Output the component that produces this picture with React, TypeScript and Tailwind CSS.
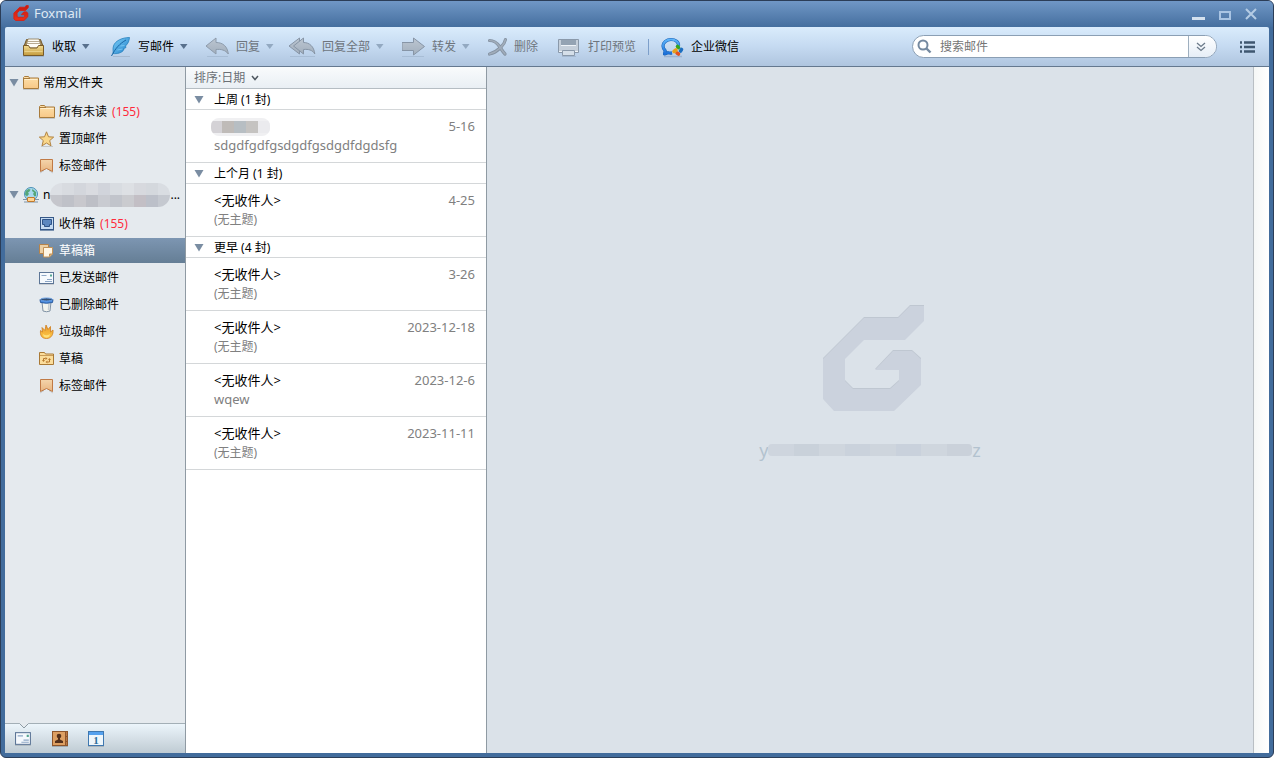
import { useState } from "react";
import type { ReactNode } from "react";

const LOGO =
  "M87 0H101V15L82 34H41L22 53V75L30 83H67L76 75V64H52L70 45H89L98 53V79L71 105H11L0 93V53L41 12H75Z";

/* ---------- small glyphs ---------- */

function Caret({ className }: { className: string }) {
  return (
    <svg viewBox="0 0 8 5" className={`h-[5px] w-2 ${className}`} aria-hidden="true">
      <path d="M0 0h7.500L3.750 5z" fill="currentColor" />
    </svg>
  );
}

function Disclosure() {
  return (
    <svg viewBox="0 0 10 8" className="h-2 w-[10px] shrink-0 text-[#7a8da2]" aria-hidden="true">
      <path d="M.5 0h9L5 7.500z" fill="currentColor" />
    </svg>
  );
}

function Icon({ children, className = "size-4" }: { children: ReactNode; className?: string }) {
  return (
    <svg viewBox="0 0 16 16" className={`shrink-0 ${className}`} aria-hidden="true">
      {children}
    </svg>
  );
}

function Gradients() {
  return (
    <svg className="absolute size-0" aria-hidden="true">
      <defs>
        <linearGradient id="folder" x1="0" y1="0" x2="0" y2="1">
          <stop offset="0" stopColor="#fde0aa" />
          <stop offset="1" stopColor="#f8c887" />
        </linearGradient>
        <linearGradient id="gold" x1="0" y1="0" x2="0" y2="1">
          <stop offset="0" stopColor="#f3dc93" />
          <stop offset="1" stopColor="#c39a3c" />
        </linearGradient>
        <linearGradient id="grey" x1="0" y1="0" x2="0" y2="1">
          <stop offset="0" stopColor="#bcc6d1" />
          <stop offset="1" stopColor="#a2afbd" />
        </linearGradient>
        <linearGradient id="blue" x1="0" y1="0" x2="1" y2="1">
          <stop offset="0" stopColor="#7fd0f8" />
          <stop offset="1" stopColor="#1f7fca" />
        </linearGradient>
        <linearGradient id="ring" x1="0" y1="0" x2="0" y2="1">
          <stop offset="0" stopColor="#5db4fa" />
          <stop offset="1" stopColor="#1a6fd8" />
        </linearGradient>
        <linearGradient id="tag" x1="0" y1="0" x2="0" y2="1">
          <stop offset="0" stopColor="#f4d5ab" />
          <stop offset="1" stopColor="#e8b580" />
        </linearGradient>
        <linearGradient id="flame" x1="0" y1="0" x2="0" y2="1">
          <stop offset="0" stopColor="#e89a2a" />
          <stop offset="1" stopColor="#ffc948" />
        </linearGradient>
        <linearGradient id="red" x1="0" y1="0" x2="0" y2="1">
          <stop offset="0" stopColor="#c41a12" />
          <stop offset="1" stopColor="#ef3018" />
        </linearGradient>
      </defs>
    </svg>
  );
}

/* ---------- folder icons ---------- */

const FolderIcon = () => (
  <Icon>
    <path d="M.5 13.500v-11l1-1h4l1 1.500h9v10.500z" fill="url(#folder)" stroke="#a87b3c" />
    <path d="M1.500 4.500h13" stroke="#fff0cf" />
    <path d="M1 3.500h6" stroke="#a87b3c" />
    <path d="M0 14.500h16" stroke="#000" strokeOpacity=".15" />
  </Icon>
);

const StarIcon = () => (
  <Icon>
    <path
      d="M7.500 .8l2 5 5.200.3-4 3.500 1.300 5.200-4.500-2.800L3 14.800l1.300-5.200-4-3.500 5.200-.3z"
      fill="#f9d78b"
      stroke="#b28443"
      strokeLinejoin="round"
    />
    <path d="M2 15.500h12" stroke="#000" strokeOpacity=".15" />
  </Icon>
);

const TagIcon = () => (
  <Icon>
    <path d="M1.500 1.500h12v12L7.500 10.500l-6 3z" fill="url(#tag)" stroke="#c07a45" />
    <path d="M1 15l4-2.500M14 15l-4-2.500" stroke="#000" strokeOpacity=".15" />
  </Icon>
);

const GlobeIcon = () => (
  <Icon>
    <circle cx="8" cy="7" r="6.500" fill="#a9d9ee" stroke="#4a90b4" />
    <path d="M2.500 4l3-2 2 .5-1 2-1.500 1L6 7 4 9.500 2 7.500zM9.500 2l3.500 3v4l-1.500.5L10 7l1-1.500-2-1.500z" fill="#55a678" />
    <path d="M0 12.500h16M1 15h14" stroke="#8095a7" />
    <rect x="4.500" y="10.500" width="7" height="4" rx=".5" fill="#ffd391" stroke="#c27a2d" />
  </Icon>
);

const InboxIcon = () => (
  <Icon>
    <rect x="1.500" y="1.500" width="13" height="12" fill="#c5dbf2" stroke="#355887" />
    <path d="M3.500 3.500h9v5h-2v2h-5v-2h-2z" fill="#5c88c0" stroke="#2f5488" />
    <path d="M1 14.500h14" stroke="#355887" strokeOpacity=".6" />
  </Icon>
);

const DraftsIcon = () => (
  <Icon>
    <path d="M.5 1.500h9v9h-9z" fill="#ecd0a5" stroke="#b5834b" />
    <path d="M4.500 4.500h9V11l-3 3h-6z" fill="#fff6e4" stroke="#c39257" />
    <path d="M13 11h-2.500v2.500" fill="#dba764" stroke="#c39257" />
  </Icon>
);

const CardIcon = ({ className = "size-4" }: { className?: string }) => (
  <Icon className={className}>
    <rect x=".5" y="2.500" width="14" height="11" fill="#f5f9fd" stroke="#5c7596" />
    <path d="M2.500 5.500h5M8 9.500h5M6 11.500h7" stroke="#8da6c5" />
    <path d="M11 4.500h2v2h-2z" fill="#55a590" />
    <path d="M0 14.500h15" stroke="#000" strokeOpacity=".12" />
  </Icon>
);

const BinIcon = () => (
  <Icon>
    <path d="M3 5h9l-1 9q-3.500 1.500-7 0z" fill="#f3f4ee" stroke="#8092a5" />
    <path d="M10 6.500L9.500 13" stroke="#c6cdd2" strokeWidth="1.500" />
    <path d="M1 2.500l.5 3q6 1.500 12 0l.5-3z" fill="#4b8ce0" stroke="#2c5c9f" />
    <ellipse cx="7.500" cy="2.500" rx="6" ry="1.500" fill="#365072" stroke="#6ba2e6" />
  </Icon>
);

const FlameIcon = () => (
  <Icon>
    <path
      d="M1.500 6.500l2 1.500-.5-4.500L6 6.500 7 1l2 4.500 2.500-3V8l2.500-2c.5 4-1.500 8.500-6.500 8.500S1 11 1.500 6.500z"
      fill="url(#flame)"
      stroke="#ce7e20"
      strokeWidth=".8"
    />
    <path d="M4 10q3.500 2.500 7 0-.5 3.500-3.500 3.500T4 10z" fill="#ffe07a" />
  </Icon>
);

const SyncFolderIcon = () => (
  <Icon>
    <path d="M.5 13.500v-12h5l1 1.500h8v10.500z" fill="#fbdd9c" stroke="#a97935" />
    <path d="M1 4.500h13" stroke="#c99c58" />
    <path d="M4.500 10V7.500h2M10.500 8v3h-2" fill="none" stroke="#b8792e" />
    <path d="M6.500 6l2 1.500-2 1.500zM8.500 9.500l-2 1.500 2 1.500zM3 9h3l-1.500 2zM9 9h3l-1.500-2z" fill="#b8792e" />
  </Icon>
);

/* ---------- toolbar icons ---------- */

function ToolIcon({ children }: { children: ReactNode }) {
  return (
    <svg viewBox="0 0 24 22" className="h-[22px] w-6 shrink-0" aria-hidden="true">
      {children}
    </svg>
  );
}

const ReceiveIcon = () => (
  <ToolIcon>
    <path d="M4.500 3.500h14l3 8h-20z" fill="#a58a52" stroke="#71572d" />
    <path d="M6 3h11l2.500 9h-16z" fill="#fffdf6" stroke="#8c7752" strokeWidth=".8" />
    <path d="M5 5.500h13M4.500 7.500h14" stroke="#a8977a" strokeWidth=".8" />
    <path d="M1.500 9.500h5l1.500 2.500h7l1.500-2.500h5v10h-20z" fill="url(#gold)" stroke="#785a28" />
    <path d="M2.500 15.500h18" stroke="#f0dc9a" strokeOpacity=".7" />
    <path d="M1 20.500h21" stroke="#000" strokeOpacity=".12" />
  </ToolIcon>
);

const FeatherIcon = () => (
  <ToolIcon>
    <path
      d="M21.500 1.500C14 1.500 7 5 5.500 10c-1 3 0 5-.5 7.500 4 .5 9-.5 11-4l-1-.5 3-1.500-.5-1.500c3-3 3.500-5 4-8.500z"
      fill="url(#blue)"
      stroke="#2580bd"
      strokeWidth=".8"
    />
    <path d="M18 4C12 7.500 7.500 12 3.500 20" fill="none" stroke="#1765a4" />
    <path d="M9.500 14l5-1M12.500 10l4-.5" stroke="#91d9fb" strokeWidth=".6" />
    <path d="M5 20.500h17" stroke="#000" strokeOpacity=".1" />
  </ToolIcon>
);

const ReplyIcon = () => (
  <ToolIcon>
    <path
      d="M0 10l10-8v4.500c7 0 11.500 4 12.300 11.500-2.800-4-7.300-5-12.300-4.500V18z"
      fill="url(#grey)"
      stroke="#8d9bab"
      strokeLinejoin="round"
    />
    <path d="M1 20.500h21" stroke="#7588a0" strokeOpacity=".25" />
  </ToolIcon>
);

const ReplyAllIcon = () => (
  <svg viewBox="0 0 28 22" className="-ml-1 h-[22px] w-7 shrink-0" aria-hidden="true">
    <path d="M1 10L11.500 2v16z" fill="url(#grey)" stroke="#8795a6" strokeLinejoin="round" />
    <path
      d="M5.500 10L15.500 2v4.500c6 0 10.500 4 11.300 11.500-2.300-4-6.300-5-11.300-4.500V18z"
      fill="url(#grey)"
      stroke="#8795a6"
      strokeLinejoin="round"
    />
    <path d="M2 20.500h25" stroke="#7588a0" strokeOpacity=".25" />
  </svg>
);

const ForwardIcon = () => (
  <ToolIcon>
    <path d="M-.5 6.500h12v-4.500L22.500 10.500l-11 8.500v-4.500h-12z" fill="url(#grey)" stroke="#8795a6" />
    <path d="M-.5 6v9" stroke="#8795a6" strokeWidth="2" />
    <path d="M0 20.500h22" stroke="#7588a0" strokeOpacity=".25" />
  </ToolIcon>
);

const DeleteIcon = () => (
  <ToolIcon>
    <g fill="none" strokeLinecap="round">
      <path d="M5.500 4.500c5 0 8 3 10 6s3.500 5.500 5.500 7.500" stroke="#8492a2" strokeWidth="3.200" />
      <path d="M21.500 3.500c-1 5-3.500 6.500-6 9-3 3-6 4.500-10 5.500" stroke="#8492a2" strokeWidth="3.200" />
      <path d="M5.500 4.500c5 0 8 3 10 6s3.500 5.500 5.500 7.500" stroke="#a0acba" strokeWidth="1.600" />
      <path d="M21.500 3.500c-1 5-3.500 6.500-6 9-3 3-6 4.500-10 5.500" stroke="#a0acba" strokeWidth="1.600" />
    </g>
  </ToolIcon>
);

const PrintIcon = () => (
  <ToolIcon>
    <path d="M.5 3.500h20v13H.5z" fill="#c5cfda" stroke="#8a99aa" />
    <path d="M3 4h15v5H3z" fill="#94a3b3" />
    <path d="M3 9.500h15M1 15.500h19" stroke="#eef3f8" />
    <path d="M4.500 14.500h12v5h-12z" fill="#d5dfe9" stroke="#8a99aa" />
    <path d="M4 20.500h14" stroke="#7588a0" strokeOpacity=".3" />
  </ToolIcon>
);

const WeComIcon = () => (
  <ToolIcon>
    <path
      d="M17.500 10c.5-4-3-6.500-7.500-6.500S2 6.500 2 10c0 2 1 3.500 2.200 4.700L3.500 18l3.500-1.300c1.500.4 2.500.5 4 .2"
      fill="none"
      stroke="#1863b8"
      strokeWidth="3.200"
      strokeLinejoin="round"
    />
    <path
      d="M17.500 10c.5-4-3-6.500-7.500-6.500S2 6.500 2 10c0 2 1 3.500 2.200 4.700L3.500 18l3.500-1.300c1.500.4 2.500.5 4 .2"
      fill="none"
      stroke="url(#ring)"
      strokeWidth="2.200"
      strokeLinejoin="round"
    />
    <g strokeLinecap="round" strokeWidth="3.600">
      <path d="M16.500 10.500l1 1" stroke="#34a51f" />
      <path d="M20.500 13.500l-1 1.500" stroke="#1d6fc0" />
      <path d="M17.500 18l-1.500-1" stroke="#e5521e" />
      <path d="M13 15.500l2-1.500" stroke="#e8a01b" />
    </g>
    <path d="M3 20.500h18" stroke="#56749a" strokeOpacity=".3" strokeWidth="1.500" />
  </ToolIcon>
);

/* ---------- data ---------- */

const tools = [
  { label: "收取", icon: <ReceiveIcon />, menu: true, enabled: true, space: "" },
  { label: "写邮件", icon: <FeatherIcon />, menu: true, enabled: true, space: "ml-[18px]" },
  { label: "回复", icon: <ReplyIcon />, menu: true, enabled: false, space: "ml-[18px]" },
  { label: "回复全部", icon: <ReplyAllIcon />, menu: true, enabled: false, space: "ml-[18px]" },
  { label: "转发", icon: <ForwardIcon />, menu: true, enabled: false, space: "ml-[18px]" },
  { label: "删除", icon: <DeleteIcon />, menu: false, enabled: false, space: "ml-[14px]" },
  { label: "打印预览", icon: <PrintIcon />, menu: false, enabled: false, space: "ml-5" },
];

type Folder = { id: string; label: string; icon: ReactNode; unread?: number };

const commonFolders: Folder[] = [
  { id: "unread", label: "所有未读", icon: <FolderIcon />, unread: 155 },
  { id: "pinned", label: "置顶邮件", icon: <StarIcon /> },
  { id: "tagged", label: "标签邮件", icon: <TagIcon /> },
];

const accountFolders: Folder[] = [
  { id: "inbox", label: "收件箱", icon: <InboxIcon />, unread: 155 },
  { id: "drafts", label: "草稿箱", icon: <DraftsIcon /> },
  { id: "sent", label: "已发送邮件", icon: <CardIcon /> },
  { id: "deleted", label: "已删除邮件", icon: <BinIcon /> },
  { id: "junk", label: "垃圾邮件", icon: <FlameIcon /> },
  { id: "draft-folder", label: "草稿", icon: <SyncFolderIcon /> },
  { id: "account-tagged", label: "标签邮件", icon: <TagIcon /> },
];

const groups = [
  { title: "上周 (1 封)", mails: [{ from: "", subject: "sdgdfgdfgsdgdfgsdgdfdgdsfg", date: "5-16" }] },
  { title: "上个月 (1 封)", mails: [{ from: "<无收件人>", subject: "", date: "4-25" }] },
  {
    title: "更早 (4 封)",
    mails: [
      { from: "<无收件人>", subject: "", date: "3-26" },
      { from: "<无收件人>", subject: "", date: "2023-12-18" },
      { from: "<无收件人>", subject: "wqew", date: "2023-12-6" },
      { from: "<无收件人>", subject: "", date: "2023-11-11" },
    ],
  },
];

/* ---------- parts ---------- */

function TitleBar() {
  return (
    <header className="flex h-[26px] items-center bg-linear-to-b from-[#7097c6] to-[#456f9f] pr-3 pb-[2px] pl-2">
      <svg viewBox="-5 -4 110 113" className="size-4" aria-hidden="true">
        <path d={LOGO} fill="url(#red)" stroke="#d3251a" strokeWidth="7" />
      </svg>
      <h1 className="ml-[5px] text-[13px] leading-4 text-[#dfe9f4]">Foxmail</h1>
      <div className="ml-auto flex gap-[14px] pt-[2px]">
        <button type="button" aria-label="最小化">
          <svg viewBox="0 0 13 12" className="h-3 w-[13px]">
            <path d="M0 10.500h13" stroke="#d4e1ee" strokeWidth="3" />
          </svg>
        </button>
        <button type="button" aria-label="最大化">
          <svg viewBox="0 0 12 12" className="size-3">
            <path d="M1 4h10v7H1z" fill="none" stroke="#a9c4e3" strokeWidth="2" />
          </svg>
        </button>
        <button type="button" aria-label="关闭">
          <svg viewBox="0 0 12 12" className="size-3">
            <path d="M1 1l10 10M11 1L1 11" stroke="#b4cbe4" strokeWidth="2" />
          </svg>
        </button>
      </div>
    </header>
  );
}

function Toolbar() {
  return (
    <div className="flex h-10 items-center rounded-t-xs border-b border-[#64788f] bg-linear-to-b from-[#daecfc] via-[#c5daf1] to-[#afc5df] pr-[14px] pl-[17px]">
      {tools.map((tool) => (
        <button
          key={tool.label}
          type="button"
          disabled={!tool.enabled}
          className={`flex shrink-0 items-center gap-[6px] ${tool.space} ${tool.enabled ? "text-black" : "text-[#6e757d]"}`}
        >
          {tool.icon}
          <span>{tool.label}</span>
          {tool.menu ? <Caret className={tool.enabled ? "text-[#58708c]" : "text-[#93a9c1]"} /> : null}
        </button>
      ))}
      <span className="ml-3 h-4 w-px bg-[#7d9fca]" />
      <button type="button" className="ml-3 flex shrink-0 items-center gap-[6px] text-black">
        <WeComIcon />
        <span>企业微信</span>
      </button>

      <form
        className="ml-auto flex h-[23px] w-[305px] items-center overflow-hidden rounded-full border border-[#8b9fb4] bg-white"
        onSubmit={(event) => event.preventDefault()}
      >
        <label htmlFor="search" className="pl-1">
          <svg viewBox="0 0 15 15" className="size-[15px]" aria-hidden="true">
            <circle cx="6" cy="6" r="4.500" fill="none" stroke="#7489a0" strokeWidth="2" />
            <path d="M9.500 9.500l4 4" stroke="#7489a0" strokeWidth="2.400" />
          </svg>
        </label>
        <input
          id="search"
          type="text"
          placeholder="搜索邮件"
          aria-label="搜索邮件"
          className="min-w-0 flex-1 bg-transparent pl-2 outline-none placeholder:text-[#757575]"
        />
        <button
          type="button"
          aria-label="搜索选项"
          className="flex h-full w-7 items-center border-l border-[#9eafbf] bg-linear-to-b from-white to-[#e6eef7] pl-[7px]"
        >
          <svg viewBox="0 0 10 10" className="size-[10px]" aria-hidden="true">
            <path d="M1 1l4 3.500L9 1M1 5l4 3.500L9 5" fill="none" stroke="#6b7a8a" strokeWidth="1.300" />
          </svg>
        </button>
      </form>
      <button type="button" aria-label="菜单" className="ml-[23px]">
        <svg viewBox="0 0 15 12" className="h-3 w-[15px]" aria-hidden="true">
          <path d="M0 1.500h2M4 1.500h11M0 6h2M4 6h11M0 10.500h2M4 10.500h11" stroke="#3f5770" strokeWidth="2.600" />
        </svg>
      </button>
    </div>
  );
}

type FolderListProps = {
  folders: Folder[];
  selected: string;
  onSelect: (id: string) => void;
};

function FolderList({ folders, selected, onSelect }: FolderListProps) {
  return (
    <ul className="my-1 flex flex-col gap-[2px]">
      {folders.map((folder) => (
        <li key={folder.id}>
          <button
            type="button"
            onClick={() => onSelect(folder.id)}
            className={`flex h-[25px] w-full items-center gap-1 pl-[34px] ${folder.id === selected ? "bg-linear-to-b from-[#7d96b2] to-[#657e95] text-white" : "text-black"}`}
          >
            {folder.icon}
            <span>{folder.label}</span>
            {folder.unread ? <span className="pl-px text-[#ff2a3c]">({folder.unread})</span> : null}
          </button>
        </li>
      ))}
    </ul>
  );
}

function Sidebar() {
  const [selected, setSelected] = useState("drafts");

  return (
    <aside className="flex w-[181px] shrink-0 flex-col border-r border-[#8f9aa3] bg-[#e5eaee]">
      <nav className="flex-1 pt-[3px]">
        <button type="button" className="flex h-[25px] w-full items-center gap-1 pl-1">
          <Disclosure />
          <FolderIcon />
          <span>常用文件夹</span>
        </button>
        <FolderList folders={commonFolders} selected={selected} onSelect={setSelected} />
        <button type="button" className="flex h-[25px] w-full items-center gap-1 pl-1">
          <Disclosure />
          <GlobeIcon />
          <span className="flex items-center">
            n
            <span className="grid h-6 w-[120px] grid-cols-10 overflow-hidden rounded-xl">
              <i className="bg-[#dcdfe4]" /><i className="bg-[#d8dbe0]" /><i className="bg-[#d3d6dc]" />
              <i className="bg-[#d9dbe0]" /><i className="bg-[#d1d4db]" /><i className="bg-[#d8dce1]" />
              <i className="bg-[#dde0e4]" /><i className="bg-[#d7d9de]" /><i className="bg-[#d4d8dd]" />
              <i className="bg-[#d9dde2]" /><i className="bg-[#c5c6cc]" /><i className="bg-[#bfc1c8]" />
              <i className="bg-[#c8c8cd]" /><i className="bg-[#bdbfc6]" /><i className="bg-[#c9cbd1]" />
              <i className="bg-[#c1c4cb]" /><i className="bg-[#cacbcf]" /><i className="bg-[#c3bfc5]" />
              <i className="bg-[#bcc0c9]" /><i className="bg-[#c5c9d0]" />
            </span>
            ...
          </span>
        </button>
        <FolderList folders={accountFolders} selected={selected} onSelect={setSelected} />
      </nav>

      <footer className="relative flex h-[30px] items-center gap-5 border-t border-[#a3afb6] bg-linear-to-b from-[#ecf5fb] to-[#bfcbd3] pl-[10px]">
        <svg viewBox="0 0 10 6" className="absolute -top-px left-[14px] h-[6px] w-[10px]" aria-hidden="true">
          <path d="M0 0h10L5 5z" fill="#e5eaee" />
          <path d="M.5.5L5 5 9.500.5" fill="none" stroke="#8d9aa3" />
        </svg>
        <button type="button" aria-label="邮件">
          <CardIcon className="size-[17px]" />
        </button>
        <button type="button" aria-label="联系人">
          <Icon>
            <rect x=".5" y=".5" width="15" height="14" fill="#b87643" stroke="#8e552b" />
            <path d="M1 1h12v13H1z" fill="#dd9f62" />
            <path d="M13.500 1v13M13 5.500h3M13 10.500h3" stroke="#8e552b" />
            <circle cx="7" cy="5" r="2.300" fill="#54301b" />
            <path d="M6 6h2v2.500l3 1.500v2H3v-2l3-1.500z" fill="#54301b" />
            <path d="M0 15.500h16" stroke="#000" strokeOpacity=".2" />
          </Icon>
        </button>
        <button type="button" aria-label="日历" className="relative">
          <Icon>
            <rect x=".5" y=".5" width="15" height="14" fill="#eef6fb" stroke="#3f78b0" />
            <path d="M1 1h14v3H1z" fill="#55a1ee" />
            <path d="M0 15.500h16" stroke="#000" strokeOpacity=".15" />
          </Icon>
          <span className="absolute inset-x-0 top-1 text-center font-['Liberation_Serif',serif] text-[11px] leading-[10px] font-bold text-[#2c6f9c]">
            1
          </span>
        </button>
      </footer>
    </aside>
  );
}

function MailList() {
  return (
    <section className="w-[301px] shrink-0 overflow-hidden border-r border-[#8f9aa3] bg-white">
      <button
        type="button"
        className="flex h-[22px] w-full items-center gap-[6px] border-b border-[#b5bdc3] bg-linear-to-b from-[#f9fbfc] to-[#e9eff4] pl-2 text-[#6b7075]"
      >
        <span>排序:日期</span>
        <svg viewBox="0 0 8 6" className="h-[6px] w-2" aria-hidden="true">
          <path d="M1 1l3 3.500L7 1" fill="none" stroke="#4f5860" strokeWidth="1.500" />
        </svg>
      </button>
      {groups.map((group) => (
        <div key={group.title}>
          <button
            type="button"
            className="flex h-[21px] w-full items-center gap-[10px] border-b border-[#d4d7d9] pt-[2px] pl-2 text-black"
          >
            <Disclosure />
            <span>{group.title}</span>
          </button>
          <ul>
            {group.mails.map((mail) => (
              <li key={mail.date} className="h-[53px] border-b border-[#d4d7d9] pt-[7px] pr-[11px] pl-7 leading-[19px]">
                <div className="flex items-center justify-between">
                  {mail.from ? (
                    <span className="text-[13px] text-black">{mail.from}</span>
                  ) : (
                    <span className="-ml-[3px] flex h-[18px] w-[59px] items-center overflow-hidden rounded-lg bg-[#f0f0f2]">
                      <i className="h-3 w-[11px] bg-[#d4d2d6]" />
                      <i className="h-3 w-3 bg-[#bfbbb8]" />
                      <i className="h-3 w-3 bg-[#b7bec3]" />
                      <i className="h-3 w-3 bg-[#c5c3c1]" />
                      <i className="h-3 flex-1 bg-[#ebebee]" />
                    </span>
                  )}
                  <span className="text-[13px] text-[#808080]">{mail.date}</span>
                </div>
                {mail.subject ? (
                  <p className="text-[13px] text-[#808080]">{mail.subject}</p>
                ) : (
                  <p className="text-[#808080]">(无主题)</p>
                )}
              </li>
            ))}
          </ul>
        </div>
      ))}
    </section>
  );
}

function Preview() {
  return (
    <main className="flex min-w-0 flex-1 flex-col items-center justify-center bg-[#dbe2e9] pb-[54px]">
      <svg viewBox="-7 -1 108 107" className="h-[107px] w-[108px]" aria-hidden="true">
        <path d={LOGO} fill="#bfc7d1" transform="translate(0 -1)" />
        <path d={LOGO} fill="#cbd2dd" />
      </svg>
      <p className="mt-[26px] flex items-center text-[18px] leading-6 text-[#b3c2cf]">
        y
        <span className="grid h-3 w-[204px] grid-cols-8 overflow-hidden rounded-sm">
          <i className="bg-[#ced5de]" />
          <i className="bg-[#c9d1da]" />
          <i className="bg-[#cfd6de]" />
          <i className="bg-[#cad2dc]" />
          <i className="bg-[#ced5dd]" />
          <i className="bg-[#c9d1dc]" />
          <i className="bg-[#cfd6de]" />
          <i className="bg-[#cad1da]" />
        </span>
        z
      </p>
    </main>
  );
}

export default function App() {
  return (
    <div className="flex h-screen flex-col overflow-hidden rounded-md border border-[#2b3d57] bg-[#426c9c] font-['Noto_Sans','Noto_Sans_CJK_SC',sans-serif] text-[12px] leading-4">
      <Gradients />
      <div className="bg-linear-to-b from-[#7097c6] to-[#456f9f] px-1">
        <TitleBar />
      </div>
      <div className="mx-1 mb-1 flex min-h-0 flex-1 flex-col">
        <Toolbar />
        <div className="flex min-h-0 flex-1">
          <Sidebar />
          <MailList />
          <Preview />
          <div className="w-4 shrink-0 border-l border-[#b9bfc4] bg-linear-to-r from-[#f5f7f6] to-white" />
        </div>
      </div>
    </div>
  );
}
